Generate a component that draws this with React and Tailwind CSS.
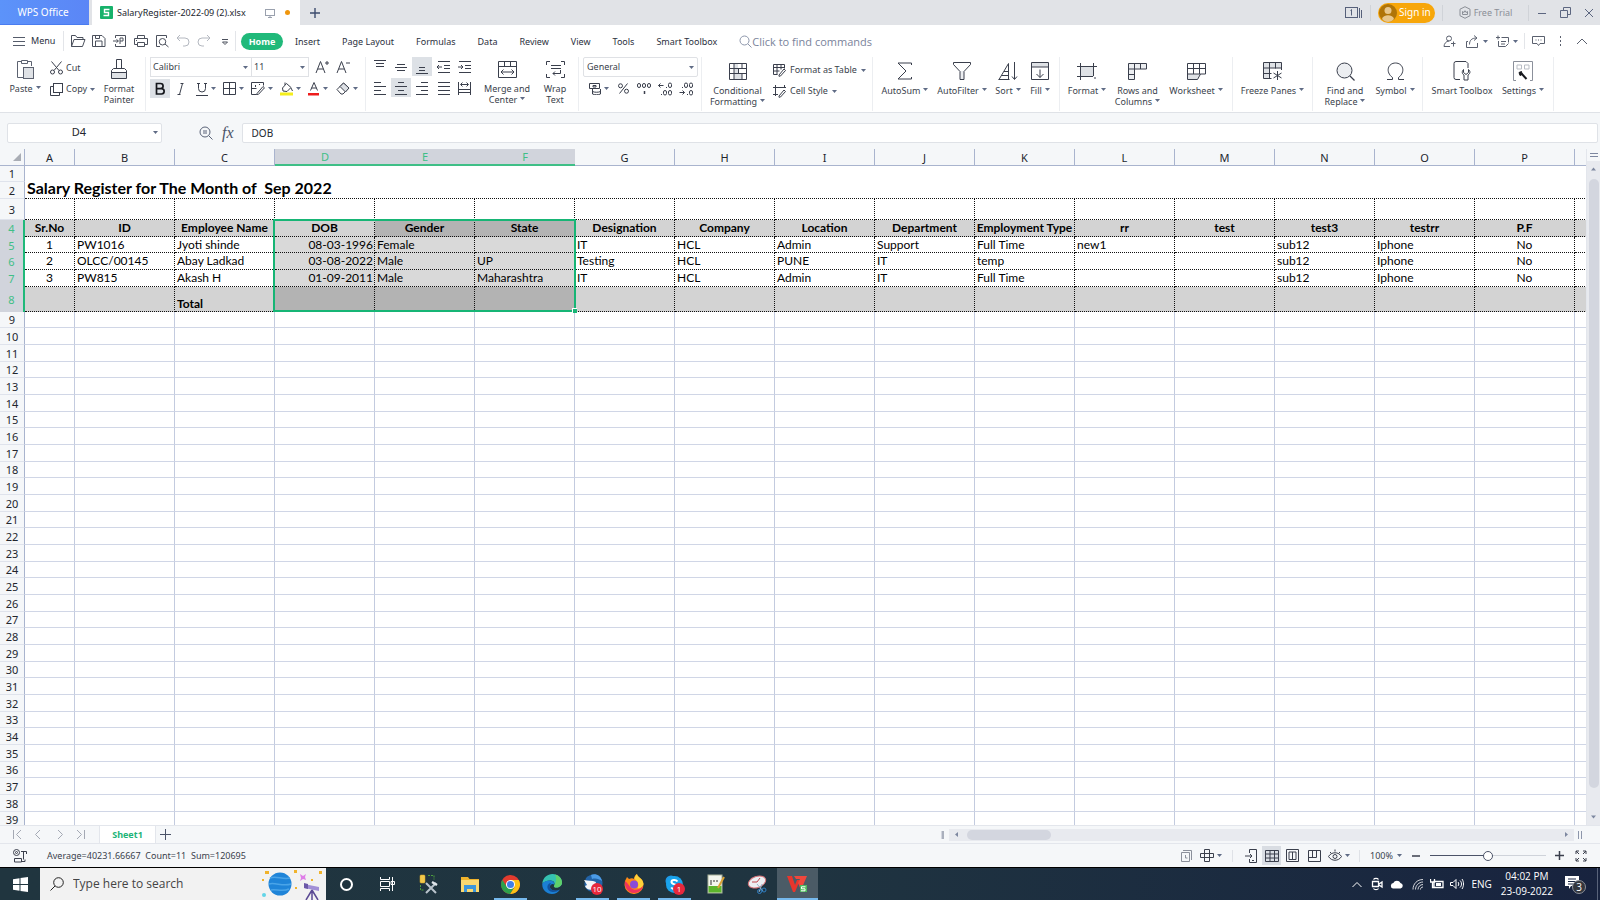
import { memo } from "react";
import clsx from "clsx";

const Svg = ({ w = 16, h = 16, children, className, sw = 1 }) => (
  <svg
    width={w}
    height={h}
    viewBox={`0 0 ${w} ${h}`}
    fill="none"
    stroke="currentColor"
    strokeWidth={sw}
    className={clsx("shrink-0", className)}
    aria-hidden="true"
  >
    {children}
  </svg>
);

const Caret = ({ className }) => (
  <svg width="5" height="3" viewBox="0 0 5 3" className={clsx("shrink-0", className)} aria-hidden="true">
    <path d="M0 0h5L2.5 3z" fill="#5f6b85" />
  </svg>
);

/* ---------- Title bar ---------- */

const TitleBar = () => (
  <header className="flex h-[25px] shrink-0 items-center bg-[#e1e3e7] text-[10px]">
    <button className="h-full w-[89px] border-b border-[#4a7cf0] bg-gradient-to-r from-[#5c93fa] to-[#5b86f6] pr-[3px] text-white">
      WPS Office
    </button>
    <div className="ml-[3px] flex h-full w-[208px] items-center bg-white pl-2 text-[#22262e]">
      <Svg w={13} h={13}>
        <rect width="13" height="13" rx="1" fill="#17b26b" stroke="none" />
        <path d="M9.500 3.500h-5v3h4v3h-5" stroke="#fff" strokeWidth="1.400" />
      </Svg>
      <span className="ml-[4px] w-[148px] text-[9px] whitespace-nowrap">SalaryRegister-2022-09 (2).xlsx</span>
      <Svg w={10} h={10} className="text-[#9aa1ae]">
        <rect x=".5" y="1.500" width="9" height="6" />
        <path d="M5 7.500v2M3 9.500h4" />
      </Svg>
      <span className="ml-[10px] h-[5px] w-[5px] rounded-full bg-[#f0960c]" />
    </div>
    <button aria-label="New tab" className="ml-[10px] text-[#3d4c6e]">
      <Svg w={10} h={10} sw={1.4}>
        <path d="M5 0v10M0 5h10" />
      </Svg>
    </button>
    <div className="ml-auto flex h-full items-center text-[#8b8f97]">
      <Svg w={17} h={12} className="mr-2 text-[#56607a]">
        <rect x=".5" y=".5" width="12" height="10" />
        <path d="M14.500 1v10M16.500 3v8M5.500 3.500l1-1v6" />
      </Svg>
      <span className="h-4 w-px bg-[#d0d3d8]" />
      <button className="mx-[7px] flex h-5 w-[57px] items-center rounded-full bg-[#f7a60a] pl-px text-white">
        <Svg w={18} h={18}>
          <circle cx="9" cy="9" r="9" fill="#b07408" stroke="none" />
          <circle cx="9" cy="6.500" r="3.500" fill="#e8c68c" stroke="none" />
          <path d="M3 15c1-5 11-5 12 0-3 4-9 4-12 0z" fill="#e8c68c" stroke="none" />
        </Svg>
        <span className="ml-[2px] whitespace-nowrap">Sign in</span>
      </button>
      <span className="h-4 w-px bg-[#d0d3d8]" />
      <button className="flex w-[85px] items-center justify-center gap-[3px] text-[9px]">
        <Svg w={12} h={13}>
          <path d="M6 .7l5 2.500v6.500L6 12.300 1 9.700V3.200z" />
          <path d="M3.500 8.500V5.500l1.500 1 1-1.800 1 1.800 1.500-1v3z" />
        </Svg>
        Free Trial
      </button>
      <span className="h-4 w-px bg-[#d0d3d8]" />
      <div className="flex items-center gap-[13px] pl-[8px] pr-[6px] text-[#5c6680]">
        <button aria-label="Minimize"><Svg w={10} h={10}><path d="M1 5.500h8" /></Svg></button>
        <button aria-label="Restore"><Svg w={11} h={11}><path d="M.5 3.500h7v7h-7zM3.500 3V.5h7v7H8" /></Svg></button>
        <button aria-label="Close"><Svg w={10} h={10}><path d="M1 1l8 8M9 1L1 9" /></Svg></button>
      </div>
    </div>
  </header>
);

/* ---------- Menu row ---------- */

const quickIcons = [
  ["Open", <path key="a" d="M1.500 13.500v-11h4l1.500 2h6v2M1.500 13.500l2.500-7h11l-2.500 7z" />],
  ["Save", <path key="a" d="M1.500 13.500v-11h9.500l3 3v8zM4.500 13v-5h6.500v5M4.500 3v2.500h4V3" />],
  ["Export to PDF", <path key="a" d="M3.500 5V2.500h10v11h-10V11M1 8h5M4.500 6.500L6.500 8l-2 1.500M8 11V5h3v3H8" />],
  ["Print", <path key="a" d="M4.500 5V2.500h7V5M4 11.500H1.500v-6h13v6H12M4.500 9.500h7v4h-7zM3 7.500h1" />],
  ["Print preview", <path key="a" d="M6 13.500H2.500v-11h10V5M8.500 5.500a3 3 0 100 6.500 3 3 0 000-6.500zM11 11l3.500 3" />],
  ["Undo", <path key="a" stroke="#b4b8c0" d="M5 2L2 5l3 3M2 5h8a3.500 3.500 0 010 8H8" />],
  ["Redo", <path key="a" stroke="#b4b8c0" d="M11 2l3 3-3 3M14 5H6a3.500 3.500 0 000 8h2" />],
  ["More", <path key="a" d="M5 6.500h6M5.500 9h5L8 11.500z" />],
];

const menuTabs = ["Insert", "Page Layout", "Formulas", "Data", "Review", "View", "Tools", "Smart Toolbox"];

const MenuRow = () => (
  <nav className="flex h-[31px] shrink-0 items-center bg-white pt-px text-[#2b3040]">
    <button className="ml-[13px] flex w-[50px] items-center gap-[6px] text-[9px]">
      <Svg w={12} h={9} className="text-[#555c6b]">
        <path d="M0 .5h12M0 4.500h12M0 8.500h12" />
      </Svg>
      Menu
    </button>
    <span className="h-5 w-px bg-[#e3e5e9]" />
    <div className="ml-[3px] flex text-[#4b505c]">
      {quickIcons.map(([label, shape]) => (
        <button key={label} aria-label={label} className="flex w-[21px] justify-center">
          <Svg>{shape}</Svg>
        </button>
      ))}
    </div>
    <span className="mr-[5px] h-5 w-px bg-[#e3e5e9]" />
    <button className="h-[17px] w-[42px] rounded-full bg-[#20b97a] text-[9px] leading-[17px] font-bold text-white">Home</button>
    <div className="ml-px flex pt-px">
      {menuTabs.map((tab) => (
        <button key={tab} className="px-[11px] text-[9px] whitespace-nowrap">{tab}</button>
      ))}
    </div>
    <label className="ml-[11px] flex items-center text-[#7a839b]">
      <Svg w={13} h={13} className="text-[#8d96ab]">
        <circle cx="5.500" cy="5.500" r="4.500" />
        <path d="M9 9l3.500 3.500" />
      </Svg>
      <input
        aria-label="Find commands"
        placeholder="Click to find commands"
        className="w-[160px] font-['Open_Sans','Noto_Sans',sans-serif] text-[11px] leading-[15px] outline-none placeholder:text-[#7a839b]"
      />
    </label>
    <div className="ml-auto flex items-center text-[#5a606e]">
      <button aria-label="Share with" className="mr-[10px]">
        <Svg w={13} h={13}>
          <circle cx="6" cy="3.500" r="2.500" />
          <path d="M6 6C3 6 1 9 1 11.500h6M8 8.500h4.500M10.500 6.500v5" />
        </Svg>
      </button>
      <button aria-label="Share" className="mr-[8px] flex items-center gap-[4px]">
        <Svg w={13} h={13}>
          <path d="M2 6.500H.5v6h11V8M3.500 9.500c0-4 2-6.500 7-6.500M8 .5L11 3 8 5.500" />
        </Svg>
        <Caret />
      </button>
      <button aria-label="Arrange" className="mr-[6px] flex items-center gap-[4px]">
        <Svg w={13} h={13}>
          <path d="M0 2.500h4M2 .5v4M5.500 2.500h7v5M2.500 6v5.500h7l3-3M5 6.500h5M5 9h4" />
        </Svg>
        <Caret />
      </button>
      <span className="h-4 w-px bg-[#e3e5e9]" />
      <button aria-label="Comments" className="ml-[7px]">
        <Svg w={13} h={12}>
          <path d="M.5 1.500h12v7H8l-1.500 2-1.500-2H.5zM3.500 5h1M6 5h1M8.500 5h1" />
        </Svg>
      </button>
      <button aria-label="More options" className="ml-[14px]">
        <Svg w={3} h={12} sw={0}>
          <path fill="currentColor" d="M1 1h1v2H1zM1 5h1v2H1zM1 9h1v2H1z" />
        </Svg>
      </button>
      <button aria-label="Collapse ribbon" className="ml-[14px] mr-[12px]">
        <Svg w={12} h={7}><path d="M1 6l5-5 5 5" /></Svg>
      </button>
    </div>
  </nav>
);

/* ---------- Ribbon ---------- */

const Group = ({ className, children }) => (
  <div className={clsx("flex h-[54px] shrink-0 border-r border-[#eceef1]", className)}>{children}</div>
);

const BigButton = ({ icon, lines, caret, className }) => (
  <button className={clsx("flex shrink-0 flex-col items-center text-center", className)}>
    <span className="flex h-5 items-center">{icon}</span>
    <span className="mt-1 text-[9px] leading-[11px] whitespace-nowrap">
      {lines.map((line, i) => (
        <span key={line} className="block">
          {line}
          {caret && i === lines.length - 1 && <Caret className="mb-[4px] ml-[3px] inline" />}
        </span>
      ))}
    </span>
  </button>
);

const SmallIcon = ({ label, active, caret, className, children }) => (
  <button
    aria-label={label}
    className={clsx("flex h-[19px] shrink-0 items-center justify-center gap-[3px]", active && "bg-[#dde1e6]", className)}
  >
    {children}
    {caret && <Caret />}
  </button>
);

const alignIcons = [
  ["Align top", false, "M2 1.500h12M4 4.500h8M4 7.500h8"],
  ["Align middle", false, "M4 5.500h8M2 8.500h12M4 11.500h8"],
  ["Align bottom", true, "M5 8.500h6M5 11.500h6M2 14.500h12"],
  ["Decrease indent", false, "M2 2.500h12M8 6.500h6M8 9.500h6M2 13.500h12M1 8h5M3 6L1 8l2 2"],
  ["Increase indent", false, "M2 2.500h12M8 6.500h6M8 9.500h6M2 13.500h12M1 8h5M4 6l2 2-2 2"],
  ["Align left", false, "M2 2.500h7M2 6.500h12M2 10.500h7M2 14.500h12"],
  ["Center", true, "M5 2.500h6M2 6.500h12M5 10.500h6M2 14.500h12"],
  ["Align right", false, "M7 2.500h7M2 6.500h12M7 10.500h7M2 14.500h12"],
  ["Justify", false, "M2 2.500h12M2 6.500h12M2 10.500h12M2 14.500h12"],
  ["Distribute", false, "M1.500 2v13M13.500 2v13M4 4.500h7M5.500 2.500l-2 2 2 2M9.500 2.500l2 2-2 2M1.500 9.500h12M1.500 12.500h12"],
];

const FontGroup = () => (
  <Group className="w-[220px] flex-col pl-[4px]">
    <div className="flex h-[20px] items-center">
      <div className="flex h-[20px] w-[159px] items-center border border-[#dfe1e5]">
        <label className="relative flex h-full w-[101px] items-center border-r border-[#dfe1e5]">
          <select aria-label="Font" className="w-full appearance-none pl-[2px] text-[9px] leading-[14px]" defaultValue="Calibri">
            <option>Calibri</option>
          </select>
          <Caret className="absolute right-[3px]" />
        </label>
        <label className="relative flex h-full flex-1 items-center">
          <select aria-label="Font size" className="w-full appearance-none pl-[2px] text-[9px] leading-[14px]" defaultValue="11">
            <option>11</option>
          </select>
          <Caret className="absolute right-[3px]" />
        </label>
      </div>
      <SmallIcon label="Increase font size" className="w-[25px]">
        <Svg w={14} h={14}><path d="M1 13L5.500 1.500 10 13M2.800 9h5.500M10 3h4M12 1v4" /></Svg>
      </SmallIcon>
      <SmallIcon label="Decrease font size" className="w-[18px]">
        <Svg w={14} h={14}><path d="M1 13L5.500 1.500 10 13M2.800 9h5.500M10 3h4" /></Svg>
      </SmallIcon>
    </div>
    <div className="mt-[2px] flex">
      <SmallIcon label="Bold" active className="w-5">
        <Svg w={12} h={14} sw={1.7} className="text-[#15171c]">
          <path d="M2.500 1.500h4a2.600 2.600 0 010 5.200h-4zM2.500 6.700h5a2.600 2.600 0 010 5.300h-5z" />
        </Svg>
      </SmallIcon>
      <SmallIcon label="Italic" className="w-[22px]">
        <Svg w={10} h={14}><path d="M4.500 1.500h3M1.500 12.500h3M6.500 1.500l-3 11" /></Svg>
      </SmallIcon>
      <SmallIcon label="Underline" caret className="w-[27px]">
        <Svg w={12} h={14}><path d="M2.500 1v5.500a3.500 3.500 0 007 0V1M0 13.500h12M1 1.500h3M8 1.500h3" /></Svg>
      </SmallIcon>
      <SmallIcon label="Borders" caret className="w-[28px]">
        <Svg w={13} h={13}><path d="M.5.5h12v12H.5zM6.500.5v12M.5 6.500h12" /></Svg>
      </SmallIcon>
      <SmallIcon label="Draw border" caret className="w-[29px]">
        <Svg w={14} h={13}>
          <path d="M.5.5h12v3M.5.5v12h5M4.500 3v2M.5 6.500h5M8.500 2v1" />
          <path d="M6 11.500l6-7 1.500 1.300-6 6.500-2 .2z" />
        </Svg>
      </SmallIcon>
      <SmallIcon label="Fill color" caret className="w-[28px]">
        <Svg w={13} h={14}>
          <path d="M2.500 6L6.500 1.500 11 5.500 7 9.500 3 9zM5 3V.5M11 6l1.500 3" />
          <rect x="0" y="10.500" width="13" height="3" fill="#f4ee1c" stroke="none" />
        </Svg>
      </SmallIcon>
      <SmallIcon label="Font color" caret className="w-[28px]">
        <Svg w={12} h={14}>
          <path d="M2.500 8.500L6 .5l3.500 8M3.500 6h5" />
          <rect x="0" y="11" width="11" height="2.500" fill="#ee1c1c" stroke="none" />
        </Svg>
      </SmallIcon>
      <SmallIcon label="Clear" caret className="w-[29px]">
        <Svg w={14} h={13}>
          <path d="M1 7.500l6.500-6.500 5.500 5L7 12H5z" fill="#fff" />
          <path d="M4 4.500l5.500 5.500L13 6 7.500 1z" fill="#dde0e5" />
        </Svg>
      </SmallIcon>
    </div>
  </Group>
);

const NumberGroup = () => (
  <Group className="w-[123px] flex-col pl-[4px]">
    <label className="relative flex h-[20px] w-[115px] items-center rounded-xs border border-[#dfe1e5]">
      <select aria-label="Number format" className="w-full appearance-none pl-[3px] text-[9px] leading-[14px]" defaultValue="General">
        <option>General</option>
      </select>
      <Caret className="absolute right-[3px]" />
    </label>
    <div className="mt-[2px] flex items-center">
      <SmallIcon label="Currency" caret className="w-[30px]">
        <Svg w={13} h={13}>
          <path d="M1.500 1.500h10v5h-10zM5 3.500h3v1.500H5zM4.500 7v5c2 1 6 1 8 0V7M4.500 9.500c2 1 6 1 8 0" />
        </Svg>
      </SmallIcon>
      <SmallIcon label="Percent" className="w-[20px]">
        <Svg w={11} h={11}>
          <circle cx="2.500" cy="2.800" r="2" />
          <circle cx="8.500" cy="8.200" r="2" />
          <path d="M9.500.5l-8 10" />
        </Svg>
      </SmallIcon>
      <SmallIcon label="Comma style" className="w-[22px]">
        <Svg w={15} h={13}>
          <rect x=".5" y="1.500" width="3" height="4" rx="1.500" />
          <rect x="5.500" y="1.500" width="3" height="4" rx="1.500" />
          <rect x="10.500" y="1.500" width="3" height="4" rx="1.500" />
          <path d="M7.500 9v3" strokeWidth="1.500" />
        </Svg>
      </SmallIcon>
      <SmallIcon label="Increase decimal" className="w-[20px]">
        <Svg w={14} h={14}>
          <rect x="10.500" y="1" width="3" height="4.500" rx="1.500" />
          <rect x="5.500" y="8.500" width="3" height="4.500" rx="1.500" />
          <rect x="10.500" y="8.500" width="3" height="4.500" rx="1.500" />
          <path d="M.5 3.500h5M2.500 1.500l-2 2 2 2M8 5.500h1M3 12.500h1" />
        </Svg>
      </SmallIcon>
      <SmallIcon label="Decrease decimal" className="w-[22px]">
        <Svg w={14} h={14}>
          <rect x="5.500" y="1" width="3" height="4.500" rx="1.500" />
          <rect x="10.500" y="1" width="3" height="4.500" rx="1.500" />
          <rect x="10.500" y="8.500" width="3" height="4.500" rx="1.500" />
          <path d="M.5 10.500h5M3.500 8.500l2 2-2 2M8 12.500h1M3 5.500h1" />
        </Svg>
      </SmallIcon>
    </div>
  </Group>
);

const Ribbon = () => (
  <section className="flex h-[57px] shrink-0 items-start overflow-hidden border-b border-[#dfe2e7] bg-white pt-px text-[#3a3f4c]">
    <Group className="w-[146px] pt-[2px]">
      <BigButton
        className="w-[50px]"
        lines={["Paste"]}
        caret
        icon={
          <Svg w={19} h={20} className="text-[#5c6270]">
            <path d="M6 2.500H1.500v16H8M12 2.500h3.500V7M5.500 1.500h6v3h-6z" />
            <rect x="7.500" y="8.500" width="10" height="11" fill="#dfe2e6" />
          </Svg>
        }
      />
      <div className="flex w-[46px] flex-col text-[9px]">
        <button className="flex h-[18px] items-center gap-[3px]">
          <Svg w={13} h={14}>
            <circle cx="2.500" cy="11" r="2" />
            <circle cx="10.500" cy="11" r="2" />
            <path d="M1.500.5l7.500 9M11.500.5l-7.500 9" />
          </Svg>
          Cut
        </button>
        <button className="mt-[3px] flex h-[18px] items-center gap-[3px]">
          <Svg w={13} h={13}>
            <path d="M3.500 3.500h-3v9h9v-3" />
            <rect x="3.500" y=".5" width="9" height="9" />
          </Svg>
          Copy
          <Caret />
        </button>
      </div>
      <BigButton
        className="w-[46px]"
        lines={["Format", "Painter"]}
        icon={
          <Svg w={16} h={20}>
            <path d="M1 14h14v5H1z" fill="#dfe2e6" stroke="none" />
            <path d="M5.500 9.500v-9h5v9M.5 19.500v-8l2-2h11l2 2v8zM.5 13.500h15" />
          </Svg>
        }
      />
    </Group>

    <FontGroup />

    <Group className="w-[213px]">
      <div className="ml-[4px] grid w-[106px] content-start grid-cols-5 gap-y-[2px]">
        {alignIcons.map(([label, active, d]) => (
          <SmallIcon key={label} label={label} active={active} className="w-[20px]">
            <Svg w={16} h={16}><path d={d} /></Svg>
          </SmallIcon>
        ))}
      </div>
      <BigButton
        className="w-[62px] pt-[2px]"
        lines={["Merge and", "Center"]}
        caret
        icon={
          <Svg w={19} h={17}>
            <path d="M.5.500h18v16H.5zM.5 5.500h18M6.500.500v5M12.500.500v5M3 11h13M5.500 8.500L3 11l2.500 2.500M13.500 8.500L16 11l-2.500 2.500" />
          </Svg>
        }
      />
      <BigButton
        className="w-[34px] pt-[2px]"
        lines={["Wrap", "Text"]}
        icon={
          <Svg w={19} h={17}>
            <path d="M4 .500H.5V4M15 .500h3.500V4M4 16.500H.5V13M15 16.500h3.500V13M5 4.500h10M5 7.500h10M14.500 9v3.500H7M9 10.500L7 12.500l2 2" />
          </Svg>
        }
      />
    </Group>

    <NumberGroup />

    <Group className="w-[171px] pt-[4px]">
      <BigButton
        className="w-[71px]"
        lines={["Conditional", "Formatting"]}
        caret
        icon={
          <Svg w={18} h={17}>
            <path d="M5 1h4v15H5zM9 11h4v5H9z" fill="#dfe2e6" stroke="none" />
            <path d="M.5.500h17v16H.5zM.5 5.500h17M.5 10.500h17M5 .500v16M9.500 5.500v5M13 .500v5M13 10.500v6" />
          </Svg>
        }
      />
      <div className="flex flex-col text-[9px]">
        <button className="flex h-[18px] items-center gap-[4px] whitespace-nowrap">
          <Svg w={13} h={14}>
            <path d="M.5 1.500h11v4M.5 1.500v10h4M.5 4.500h11M.5 8h6M4 1.500v10M8 1.500v5" />
            <path d="M6 12l5-6 1.500 1.500-5 5.500-1.500.3z" />
          </Svg>
          Format as Table
          <Caret />
        </button>
        <button className="mt-[3px] flex h-[18px] items-center gap-[4px] whitespace-nowrap">
          <Svg w={13} h={14}>
            <path d="M0 3.500h13M2.500 1v11M0 10.500h5M11.500 1v3" />
            <path d="M6 12l5-6 1.500 1.500-5 5.500-1.500.3z" />
          </Svg>
          Cell Style
          <Caret />
        </button>
      </div>
    </Group>

    <Group className="w-[187px] pt-[4px] pl-[3px]">
      <BigButton
        className="w-[58px]"
        lines={["AutoSum"]}
        caret
        icon={<Svg w={16} h={18}><path d="M14.500 3V1H1l8 8-8 8h13.500v-2" /></Svg>}
      />
      <BigButton
        className="w-[56px]"
        lines={["AutoFilter"]}
        caret
        icon={
          <Svg w={18} h={18}>
            <path d="M7 9h4v8H7z" fill="#eceef1" stroke="none" />
            <path d="M.5.500h17v2L11 9.500v8H7v-8L.5 2.500z" />
          </Svg>
        }
      />
      <BigButton
        className="w-[36px]"
        lines={["Sort"]}
        caret
        icon={<Svg w={20} h={19}><path d="M1 17.500L10.500 1.500v16M3.500 13.500h7M6 9.500h4.500M.5 17.500h11M16.500 0v17M14 14.500l2.500 3 2.500-3" /></Svg>}
      />
      <BigButton
        className="w-[28px]"
        lines={["Fill"]}
        caret
        icon={
          <Svg w={18} h={18}>
            <path d="M1 1h16v4H1z" fill="#dfe2e6" stroke="none" />
            <path d="M.5.500h17v17H.5zM.5 5h17M9 7.500v8M5.500 12L9 15.500l3.500-3.500" />
          </Svg>
        }
      />
    </Group>

    <Group className="w-[173px] pt-[4px] pl-[3px]">
      <BigButton
        className="w-[48px]"
        lines={["Format"]}
        caret
        icon={
          <Svg w={20} h={17}>
            <path d="M3 3.500h14v10H3z" fill="#dfe2e6" stroke="none" />
            <path d="M0 3.500h20M0 13.500h16M3.500 0v17M16.500 0v13M18 14v2" />
          </Svg>
        }
      />
      <BigButton
        className="w-[53px]"
        lines={["Rows and", "Columns"]}
        caret
        icon={
          <Svg w={19} h={17}>
            <path d="M1 1h17v5H7v10H1z" fill="#eceef1" stroke="none" />
            <path d="M.5.500h18v5.500H6.500v10.500h-6zM.5 6h6M.5 11.500h6M6.500.500V6M12.500.500V6" />
          </Svg>
        }
      />
      <BigButton
        className="w-[64px]"
        lines={["Worksheet"]}
        caret
        icon={
          <Svg w={19} h={17}>
            <path d="M1 11h12l-2 5H1z" fill="#dfe2e6" stroke="none" />
            <path d="M.5.500h18v10.500h-5l-3 5.500H.5zM.5 5.500h18M.5 11h13M6.500.500V11M12.500.500V11" />
          </Svg>
        }
      />
    </Group>

    <Group className="w-[80px] justify-center pt-[4px]">
      <BigButton
        lines={["Freeze Panes"]}
        caret
        icon={
          <Svg w={20} h={19}>
            <path d="M1 1h17v5H7v10H1z" fill="#dfe2e6" stroke="none" />
            <path d="M.5 16.500V.500h18V8M.5 6h18M6.500.500v16M12.500.500v6M.5 11.500h8M.5 16.500h8M14.500 9v9M10.500 11l8 5M18.500 11l-8 5" />
          </Svg>
        }
      />
    </Group>

    <Group className="w-[110px] pt-[4px] pl-[7px]">
      <BigButton
        className="w-[50px]"
        lines={["Find and", "Replace"]}
        caret
        icon={
          <Svg w={19} h={19}>
            <circle cx="8.500" cy="8.500" r="7.500" fill="#eceef1" />
            <path d="M14 14l4.500 4.500" strokeWidth="1.300" />
          </Svg>
        }
      />
      <BigButton
        className="w-[50px]"
        lines={["Symbol"]}
        caret
        icon={<Svg w={17} h={19}><path d="M0 17.500h5.500v-2C-2 10 1 1 8.500 1s10.500 9 3 14.500v2H17" /></Svg>}
      />
    </Group>

    <Group className="w-[131px] pt-[4px] pl-[4px]">
      <BigButton
        className="w-[70px]"
        lines={["Smart Toolbox"]}
        icon={
          <Svg w={18} h={20}>
            <path d="M7 18.500H3a2 2 0 01-2-2v-14a2 2 0 012-2h10l2 2V7" />
            <path d="M10.500 8.500v3l2.500 2 2.500-2v-3c2 1.500 2 4-.5 5.500V19h-4v-5c-2.500-1.500-2-4-.5-5.500z" fill="#fff" />
          </Svg>
        }
      />
      <BigButton
        className="w-[52px]"
        lines={["Settings"]}
        caret
        icon={
          <Svg w={20} h={20}>
            <path d="M3 19.500H.5V.500h19v19H17" stroke="#8b909b" />
            <path d="M4 4h4.500v4H4zM11.500 4H16v4h-4.500z" stroke="#b9bdc5" />
            <path d="M8.500 12.500l5 5.500" stroke="#15171c" strokeWidth="2" />
            <path d="M6 11.500l2.500-1 .500 3-2 1z" fill="#15171c" stroke="#15171c" />
          </Svg>
        }
      />
    </Group>
  </section>
);

/* ---------- Formula bar ---------- */

const FormulaBar = () => (
  <div className="flex h-9 shrink-0 items-center bg-[#f5f7f9] pt-[3px] pr-[2px] pl-[7px] text-[11px] text-[#22262e]">
    <label className="relative flex h-[20px] w-[155px] items-center rounded-xs border border-[#dfe2e7] bg-white">
      <input aria-label="Name box" defaultValue="D4" className="w-full pr-[11px] text-center text-[11px] outline-none" />
      <Caret className="absolute right-[3px]" />
    </label>
    <button aria-label="Zoom out selection" className="ml-[37px] text-[#5a6378]">
      <Svg w={14} h={14}>
        <circle cx="6" cy="6" r="5" />
        <path d="M9.800 9.800l3.700 3.700M4 5h4M4 7h4" />
      </Svg>
    </button>
    <button className="ml-[9px] font-['Liberation_Serif',serif] text-[16px] leading-[18px] text-[#4b5368] italic">fx</button>
    <input
      aria-label="Formula"
      defaultValue="DOB"
      className="ml-[8px] h-[20px] min-w-0 flex-1 rounded-xs border border-[#dfe2e7] bg-white pl-[9px] text-[10px] outline-none"
    />
  </div>
);

/* ---------- Sheet ---------- */

// the last column is only partly in view and has no letter
const columns = [..."ABCDEFGHIJKLMNOP", ""];

const headings = [
  "Sr.No", "ID", "Employee Name", "DOB", "Gender", "State", "Designation", "Company",
  "Location", "Department", "Employment Type", "rr", "test", "test3", "testrr", "P.F", "",
];

const employees = [
  ["1", "PW1016", "Jyoti shinde", "08-03-1996", "Female", "", "IT", "HCL", "Admin", "Support", "Full Time", "new1", "", "sub12", "Iphone", "No", ""],
  ["2", "OLCC/00145", "Abay Ladkad", "03-08-2022", "Male", "UP", "Testing", "HCL", "PUNE", "IT", "temp", "", "", "sub12", "Iphone", "No", ""],
  ["3", "PW815", "Akash H", "01-09-2011", "Male", "Maharashtra", "IT", "HCL", "Admin", "IT", "Full Time", "", "", "sub12", "Iphone", "No", ""],
];

const totals = columns.map((c) => (c === "C" ? "Total" : ""));
const blankRows = Array.from({ length: 31 }, (_, i) => i + 9);

const isSelected = (col) => col >= 3 && col <= 5;

const RowHead = ({ n, selected }) => (
  <th
    scope="row"
    className={clsx(
      "p-0 font-['Noto_Sans',sans-serif] text-center text-[11px] leading-[15px] font-normal",
      selected
        ? "border-r-2 border-[#20b97a] bg-[#d1d4dc] text-[#3fbf87]"
        : "border-r border-b border-r-[#a9b4ce] border-b-[#dfe3ec] bg-[#f5f7f9] text-[#22262e]"
    )}
  >
    {n}
  </th>
);

const dotted = "border-r border-b border-dotted border-[#111]";

const align = (col) => {
  if (col === 0 || col === 15) return "text-center";
  if (col === 3) return "text-right pr-px";
  return "text-left pl-[2px]";
};

const Sheet = () => (
  <div className="relative min-w-0 flex-1 overflow-hidden bg-white">
    <table className="w-[1675px] table-fixed border-separate border-spacing-0 text-black">
      <colgroup>
        <col className="w-[25px]" />
        {columns.map((c) => (
          <col key={c} className={c === "A" ? "w-[50px]" : "w-[100px]"} />
        ))}
      </colgroup>
      <thead>
        <tr className="h-[17px] bg-[#f5f7f9] text-[11px] leading-[15px]">
          <td className="border-r border-b border-[#a9b4ce] p-0">
            <Svg w={8} h={8} className="ml-auto mr-[3px]">
              <path d="M8 0v8H0z" fill="#a9adb5" stroke="none" />
            </Svg>
          </td>
          {columns.map((c, i) => (
            <th
              key={c}
              scope="col"
              className={clsx(
                "p-0 font-normal",
                isSelected(i)
                  ? "border-b-2 border-[#3fbf87] bg-[#d1d4dc] text-[#3fbf87]"
                  : "border-r border-b border-[#a9b4ce] text-[#22262e]"
              )}
            >
              {c}
            </th>
          ))}
        </tr>
      </thead>
      <tbody className="font-['Lato','Noto_Sans',sans-serif] text-[12px] leading-[14px]">
        <tr className="h-[16px]">
          <RowHead n={1} />
          <td colSpan={17} rowSpan={2} className="border-b border-dotted border-[#111] p-0 pl-[2px] align-bottom text-[16px] leading-[20px] font-bold whitespace-pre">
            Salary Register for The Month of  Sep 2022
          </td>
        </tr>
        <tr className="h-[17px]">
          <RowHead n={2} />
        </tr>
        <tr className="h-[21px]">
          <RowHead n={3} />
          {columns.map((c) => <td key={c} className={clsx(dotted, "p-0")} />)}
        </tr>
        <tr className="h-[17px]">
          <RowHead n={4} selected />
          {headings.map((h, i) => (
            <td
              key={i}
              className={clsx(
                dotted,
                "p-0 text-center font-bold whitespace-nowrap",
                i === 4 || i === 5 ? "bg-[#b3b3b3]" : "bg-[#d3d3d3]"
              )}
            >
              {h}
            </td>
          ))}
        </tr>
        {employees.map((row, r) => (
          <tr key={row[0]} className={r === 0 ? "h-[16px]" : "h-[17px]"}>
            <RowHead n={r + 5} selected />
            {row.map((value, i) => (
              <td key={i} className={clsx(dotted, "p-0 whitespace-nowrap", align(i), isSelected(i) && "bg-[#d9d9d9]")}>
                {value}
              </td>
            ))}
          </tr>
        ))}
        <tr className="h-[25px]">
          <RowHead n={8} selected />
          {totals.map((value, i) => (
            <td
              key={i}
              className={clsx(dotted, "p-0 pl-[2px] align-bottom font-bold", isSelected(i) ? "bg-[#b3b3b3]" : "bg-[#d3d3d3]")}
            >
              {value}
            </td>
          ))}
        </tr>
        {blankRows.map((n) => (
          <tr key={n} className={n % 3 === 0 ? "h-[16px]" : "h-[17px]"}>
            <RowHead n={n} />
            {columns.map((c) => (
              <td key={c} className="border-r border-b border-r-[#c3cbdf] border-b-[#d0d6e6] p-0" />
            ))}
          </tr>
        ))}
      </tbody>
    </table>
    {/* Selection frame over D4:F8 */}
    <div className="pointer-events-none absolute top-[70px] left-[273px] h-[93px] w-[303px] border-2 border-[#17b575]">
      <span className="absolute -right-[3px] -bottom-[3px] h-[5px] w-[5px] border-t border-l border-white bg-[#17b575]" />
    </div>
  </div>
);

const VerticalScroll = () => (
  <div className="flex w-[14px] shrink-0 flex-col items-center border-l border-[#e3e6ec] bg-[#f5f7f9]">
    <Svg w={8} h={12} className="text-[#7d87a0]"><path d="M0 4.500h8M0 7.500h8" /></Svg>
    <div className="flex w-full flex-1 flex-col items-center bg-[#e8eaef]">
      <Svg w={7} h={18}><path d="M1 9.500l2.500-3 2.500 3z" fill="#7d87a0" stroke="none" /></Svg>
      <div className="w-[10px] flex-1 rounded-full bg-[#d3d6df]" />
      <Svg w={7} h={37}><path d="M1 27.500l2.500 3 2.500-3z" fill="#7d87a0" stroke="none" /></Svg>
    </div>
  </div>
);

/* ---------- Sheet tabs and status bar ---------- */

const sheetNav = [
  ["First sheet", "M1.500 1v9M9 1L4.500 5.500 9 10"],
  ["Previous sheet", "M7 1L2.500 5.500 7 10"],
  ["Next sheet", "M3 1l4.500 4.500L3 10"],
  ["Last sheet", "M1 1l4.500 4.500L1 10M8.500 1v9"],
];

const SheetTabs = () => (
  <div className="flex h-[18px] shrink-0 items-center border-t border-[#e3e6ec] bg-[#f5f7f9]">
    <div className="flex w-[99px] justify-between pr-[13px] pl-[12px] text-[#a4a9b4]">
      {sheetNav.map(([label, d]) => (
        <button key={label} aria-label={label}><Svg w={10} h={11}><path d={d} /></Svg></button>
      ))}
    </div>
    <button className="h-full w-[57px] border-x border-[#e3e6ec] bg-white text-[9px] leading-[18px] font-bold text-[#1cb478]">Sheet1</button>
    <button aria-label="Add sheet" className="ml-1 text-[#4b5368]">
      <Svg w={11} h={11}><path d="M5.500 0v11M0 5.500h11" /></Svg>
    </button>
    <div className="ml-auto flex h-full w-[659px] items-center">
      <span className="mr-[5px] h-[8px] w-[3px] border-r-2 border-l border-r-[#aab0bd] border-l-[#d3d6df]" />
      <div className="flex h-[12px] flex-1 items-center bg-[#e8eaef]">
        <Svg w={5} h={7} className="ml-[5px]"><path d="M4 1L1 3.500 4 6z" fill="#7d87a0" stroke="none" /></Svg>
        <div className="ml-[8px] h-[10px] w-[84px] rounded-full bg-[#d3d6df]" />
        <Svg w={5} h={7} className="mr-[5px] ml-auto"><path d="M1 1l3 2.500L1 6z" fill="#7d87a0" stroke="none" /></Svg>
      </div>
      <span className="mr-[18px] ml-[4px] h-[8px] w-[4px] border-x border-[#8d96ab]" />
    </div>
  </div>
);

const StatusBar = () => (
  <div className="flex h-[24px] shrink-0 items-center border-t border-[#e3e6ec] bg-[#f5f7f9] text-[9px] text-[#3a3f4c]">
    <button aria-label="Record macro" className="ml-[13px] w-[34px]">
      <Svg w={14} h={14}>
        <circle cx="3.500" cy="3.500" r="3" />
        <circle cx="3.500" cy="3.500" r="1" />
        <path d="M8 2.500h5.500v2.500M10.500 2.500v8M1.500 9.500h7v3.500h-7zM8.500 12.500h3.500v-2" />
      </Svg>
    </button>
    <span className="whitespace-pre">Average=40231.66667  Count=11  Sum=120695</span>
    <div className="ml-auto flex h-full items-center">
      <Svg w={11} h={12}><path d="M2 .5h8.500V10M.5 2.500h8v9h-8zM4.500 5v3h2" stroke="#8b909b" /></Svg>
      <button aria-label="Reading layout" className="ml-[8px] flex items-center gap-[3px]">
        <Svg w={14} h={13}><path d="M4.500.5h5v12h-5zM.5 4.500h13v4H.5z" /></Svg>
        <Caret />
      </button>
      <span className="mr-[12px] ml-[10px] h-3 w-px bg-[#dfe2e7]" />
      <button aria-label="Mobile view" className="mr-[4px]">
        <Svg w={13} h={14}><path d="M4.500 4V.5h7v13h-7V10M0 7h7M5 5l2 2-2 2M7 11.500h2" /></Svg>
      </button>
      <button aria-label="Normal view" className="flex h-[19px] w-[19px] items-center justify-center bg-[#d9dde3]">
        <Svg w={14} h={12}><path d="M.5.5h13v11H.5zM.5 4h13M.5 8h13M5 .5v11M9.500.5v11" /></Svg>
      </button>
      <button aria-label="Page layout view" className="ml-[5px]">
        <Svg w={13} h={13}><path d="M.5.5h12v12H.5zM3 3h7v7.500H3zM6.500 3v7.500" /></Svg>
      </button>
      <button aria-label="Page break preview" className="ml-[9px]">
        <Svg w={13} h={12}><path d="M.5.5h12v11H.5zM.5 7.500h8v-7M4.500.5v7" /></Svg>
      </button>
      <button aria-label="Reading mode" className="ml-[7px] flex items-center gap-[3px]">
        <Svg w={14} h={13}>
          <path d="M.5 7.500c3-5 10-5 13 0-3 5-10 5-13 0zM2 3l1.500 1.500M7 .5v2M12 3l-1.500 1.500" />
          <circle cx="7" cy="7.500" r="2" />
        </Svg>
        <Caret />
      </button>
      <span className="mr-[10px] ml-[9px] h-3 w-px bg-[#dfe2e7]" />
      <button className="flex items-center gap-[4px]">100%<Caret /></button>
      <button aria-label="Zoom out" className="ml-[10px]"><Svg w={8} h={8} sw={1.5}><path d="M0 4h8" /></Svg></button>
      <div className="relative ml-[10px] flex w-[116px] items-center">
        <div className="absolute h-px w-full bg-[#cfd3da]" />
        <div className="absolute h-px w-1/2 bg-[#4b5368]" />
        <input
          type="range"
          aria-label="Zoom"
          defaultValue={50}
          className="relative w-full appearance-none bg-transparent [&::-webkit-slider-thumb]:h-[10px] [&::-webkit-slider-thumb]:w-[10px] [&::-webkit-slider-thumb]:appearance-none [&::-webkit-slider-thumb]:rounded-full [&::-webkit-slider-thumb]:border [&::-webkit-slider-thumb]:border-[#4b5368] [&::-webkit-slider-thumb]:bg-white"
        />
      </div>
      <button aria-label="Zoom in" className="ml-[9px]"><Svg w={9} h={9} sw={1.5}><path d="M4.500 0v9M0 4.500h9" /></Svg></button>
      <button aria-label="Full screen" className="mr-[13px] ml-[11px]">
        <Svg w={12} h={12}><path d="M1 4V1h3M8 1h3v3M11 8v3H8M4 11H1V8M1 1l3 3M11 1L8 4M11 11L8 8M1 11l3-3" /></Svg>
      </button>
    </div>
  </div>
);

/* ---------- Taskbar ---------- */

const Badge = ({ children }) => (
  <span className="absolute top-[15px] right-[10px] flex h-[12px] w-[12px] items-center justify-center rounded-full bg-[#e8283c] text-[8px] leading-[12px] text-white">
    {children}
  </span>
);

const apps = [
  {
    name: "Cortana",
    icon: <Svg w={15} h={15} sw={2} className="text-white"><circle cx="7.500" cy="7.500" r="5.500" /></Svg>,
  },
  {
    name: "Task view",
    icon: <Svg w={15} h={14} className="text-white"><path d="M.5 0v2.500h9V0M.5 14v-2.500h9V14M.5 4.500h9v5h-9zM12.500 0v14M11 4.500h3.500v3H11z" /></Svg>,
  },
  {
    name: "Admin tools",
    icon: (
      <Svg w={20} h={20}>
        <rect x="1" y="1" width="5" height="8" rx="1" fill="#f2c94c" stroke="#d9a520" strokeWidth=".5" />
        <path d="M9 1.500h6v4M1.500 11v5h4" stroke="#4c9a3f" strokeDasharray="2 1" />
        <path d="M7 9l10 10M17 9L7 19" stroke="#b9c3cc" strokeWidth="2" />
        <path d="M13 8l5 3" stroke="#dfe5ea" strokeWidth="2.500" />
      </Svg>
    ),
  },
  {
    name: "File Explorer",
    icon: (
      <Svg w={18} h={17} sw={0}>
        <path d="M0 1h7l1.500 2H18v13H0z" fill="#f0b32c" />
        <path d="M0 4h18v12H0z" fill="#fbd971" />
        <path d="M3 9h12v7h-3v-3H6v3H3z" fill="#3d97dc" />
      </Svg>
    ),
  },
  {
    name: "Chrome",
    open: true,
    icon: (
      <Svg w={19} h={19} sw={0}>
        <circle cx="9.500" cy="9.500" r="9.500" fill="#e33b2e" />
        <path d="M9.500 5h8.300A9.500 9.500 0 019 19l4.500-7z" fill="#fbc116" />
        <path d="M1.300 4.700A9.500 9.500 0 009 19l4.300-6.800-7.700-.7z" fill="#2da14c" />
        <circle cx="9.500" cy="9.500" r="4.500" fill="#fff" />
        <circle cx="9.500" cy="9.500" r="3.500" fill="#3f7ee8" />
      </Svg>
    ),
  },
  {
    name: "Edge",
    icon: (
      <Svg w={20} h={20} sw={0}>
        <path d="M.3 9.500C1 3.500 5.500 0 10.500 0 16 0 20 4 20 8.500c0 3.500-3 5-5.500 5-2 0-3-.7-2.500-1.500 1.500-2.500 0-5.500-3.500-5.500C4.500 6.500 2 8 .3 9.500z" fill="#35c1b1" />
        <path d="M13 .5C17 1.500 20 4.500 20 8.500c0 3.500-3 5-5.500 5-2 0-3-.7-2.500-1.500 2-3 3-7 1-11.500z" fill="#5fd06a" />
        <path d="M.3 9.500C2 7.500 4.500 6.500 8 6.500c3 0 4.500 2 4.300 4-2-1.500-4.800.5-4.300 3 .6 3 5 4.500 10 2C16 18.500 13 20 10 20 4 20-.3 15.500.3 9.500z" fill="#1b7fd4" />
        <path d="M8 9c-4 2-3.500 8 2.500 9 2.500.3 5-.5 7-2.200-4 1.500-8.500.7-9.500-2.300-.4-1.500 0-3 1-4z" fill="#12529e" />
      </Svg>
    ),
  },
  {
    name: "Thunderbird",
    open: true,
    badge: "10",
    icon: (
      <Svg w={20} h={20} sw={0}>
        <path d="M3 4C7-1 16-1 19 6c2 6-2 12-9 12-5 0-9-4-8.500-9z" fill="#2364a8" />
        <path d="M8 1c5-2 10 1 11 6-3-2-6-3-10-2z" fill="#4b9be6" />
        <path d="M1 6c4 1 8 0 12 2l-2 7c-4 2-8 0-9-3l2-1z" fill="#f3f5f8" />
      </Svg>
    ),
  },
  {
    name: "Firefox",
    open: true,
    icon: (
      <Svg w={20} h={20} sw={0}>
        <path d="M1 7l2-4 2 2c2-1 4-1 5 0 0-2 1-4 3-5 0 3 6 4 6.500 10A9.500 9.500 0 01.5 11z" fill="#ff8a16" />
        <path d="M13 0c0 3 6 4 6.500 10-1 4-4 5-6 4 2-4 0-7-3-9 0-2 1-4 2.500-5z" fill="#ffd23a" />
        <path d="M1 7c-1 6 3 12 9 12 5 0 8-3 9-7-3 4-9 5-12 2C5 12 4 9 1 7z" fill="#f0325e" />
        <circle cx="10" cy="10.500" r="4" fill="#8a4bd8" />
      </Svg>
    ),
  },
  {
    name: "Skype",
    open: true,
    badge: "1",
    icon: (
      <Svg w={19} h={19}>
        <circle cx="6" cy="6" r="5.500" fill="#1f9be8" stroke="none" />
        <circle cx="9.500" cy="9.500" r="8.500" fill="#19a3ec" stroke="none" />
        <path d="M12.500 6.500C11 4.500 6.500 4.500 6.500 7c0 3 6.500 1.800 6.500 5 0 2.500-5 3-6.800.5" stroke="#fff" strokeWidth="2" />
      </Svg>
    ),
  },
  {
    name: "Notepad",
    icon: (
      <Svg w={18} h={20}>
        <rect x="1" y="1" width="14" height="18" fill="#f4f6ee" stroke="#aab29a" />
        <rect x="1.500" y="12" width="13" height="6.500" fill="#5cb52c" stroke="none" />
        <path d="M4 6v5M6 7h2M9 7h2" stroke="#333" />
        <path d="M17 3l-6 11" stroke="#d9a136" strokeWidth="2" />
      </Svg>
    ),
  },
  {
    name: "Snipping Tool",
    icon: (
      <Svg w={20} h={19}>
        <ellipse cx="10" cy="7" rx="9" ry="5.500" transform="rotate(-20 10 7)" fill="#eceff2" stroke="#d9757a" />
        <path d="M10 7l3-4M10 7H5" stroke="#c0464c" />
        <path d="M10 9l6 7M15 9l-3 8" stroke="#9ab6cc" />
        <circle cx="17" cy="15" r="2" stroke="#2f7fc4" />
        <circle cx="12.500" cy="16.500" r="2" stroke="#2f7fc4" />
      </Svg>
    ),
  },
  {
    name: "WPS",
    open: true,
    active: true,
    icon: (
      <Svg w={21} h={18} sw={0}>
        <path d="M0 1h5l3 9 2-5h3L8 17H6z" fill="#e8352c" />
        <path d="M7 1h13l-6 14-3-7 2-4H9z" fill="#f0473c" />
        <rect x="13" y="10" width="7" height="7" fill="#4cb85c" />
        <path d="M18.500 11.800h-4v2h3.500v2h-4" stroke="#fff" strokeWidth="1" />
      </Svg>
    ),
  },
];

const SearchArt = () => (
  <Svg w={65} h={32} sw={0}>
    <circle cx="19" cy="16" r="11.500" fill="#1f84d8" />
    <path d="M9 10c6-3 12 2 20 0M8 16c6-2 14 3 22 0M10 22c5-1 12 2 18-1" stroke="#4aa4e8" strokeWidth="1.500" />
    <path d="M4 3h4v3H4zM33 2h3v3h-3zM58 3h3v3h-3zM1 11h2v2H1zM34 19h2v2h-2zM50 11h2v2h-2z" fill="#f0b32c" />
    <path d="M39 6l3 2 3-2-1 3 1 3-3-1-3 2 1-3z" fill="#df7ee8" />
    <circle cx="3" cy="27" r="2" fill="#62d5e8" />
    <path d="M43 16l15 3v4l-15-3z" fill="#a18fd6" />
    <path d="M43 15l4 1v5l-4-1z" fill="#6b58a8" />
    <path d="M51 22l-6 10M51 22v10M51 22l6 10" stroke="#5b4a94" strokeWidth="1.500" />
  </Svg>
);

const Taskbar = () => (
  <footer className="flex h-[33px] shrink-0 items-stretch border-t border-black bg-gradient-to-r from-[#20353f] via-[#1f3440] to-[#18233f] font-['Open_Sans','Noto_Sans',sans-serif] text-white">
    <button aria-label="Start" className="flex w-10 items-center justify-center">
      <Svg w={15} h={15} sw={0}>
        <path d="M0 2.200l6.500-.9v5.700H0zM7.500 1.100L15 0v7H7.500zM0 8h6.500v5.700L0 12.800zM7.500 8H15v7l-7.500-1.100z" fill="#fff" />
      </Svg>
    </button>
    <label className="flex w-[286px] items-center bg-[#f2f2f2] text-[#444]">
      <Svg w={14} h={14} className="ml-[10px] text-[#222]">
        <circle cx="8.500" cy="5.500" r="4.800" />
        <path d="M5 9L.5 13.500" />
      </Svg>
      <input placeholder="Type here to search" aria-label="Search" className="ml-[9px] min-w-0 flex-1 text-[12px] outline-none placeholder:text-[#444]" />
      <SearchArt />
    </label>
    <div className="flex">
      {apps.map(({ name, icon, open, active, badge }) => (
        <button
          key={name}
          aria-label={name}
          className={clsx("relative flex w-[41px] items-center justify-center", active && "bg-[#4b5b66]")}
        >
          {icon}
          {badge && <Badge>{badge}</Badge>}
          {open && <span className={clsx("absolute bottom-0 h-[2px] bg-[#76b9ed]", active ? "inset-x-0" : "inset-x-[4px]")} />}
        </button>
      ))}
    </div>
    <div className="ml-auto flex items-center">
      <Svg w={10} h={7}><path d="M.5 6L5 1.500 9.500 6" /></Svg>
      <Svg w={12} h={14} className="ml-[9px]" sw={1.3}>
        <path d="M1.500 4.500h6v5h-6zM8 7l3-2v5l-3-2M2.500 2.500c1-1.500 4-1.500 5 0M2.500 11.500c1 1.500 4 1.500 5 0" />
      </Svg>
      <Svg w={14} h={10} className="ml-[7px]" sw={0}>
        <path d="M3 9.500a2.800 2.800 0 01.3-5.500A4 4 0 0110.500 4a2.800 2.800 0 010 5.500z" fill="#fff" />
      </Svg>
      <Svg w={12} h={12} className="ml-[8px]">
        <path d="M1 11.500C1 6 5 1.500 11 1.500M3.500 11.500C3.500 7.500 7 4 11 4M6 11.500c0-2.500 2-5 5-5M8.500 11.500c0-1.500 1-2.500 2.500-2.500" opacity=".8" />
      </Svg>
      <Svg w={14} h={12} className="ml-[6px]" sw={1.3}>
        <path d="M4 3.500h9v6H4zM.5 1v3h4V1M2.500 4v5.500H5" />
        <path d="M6 5h5v3H6z" fill="#fff" stroke="none" />
      </Svg>
      <Svg w={14} h={12} className="ml-[6px]">
        <path d="M.5 4.500H3l3-3v9l-3-3H.5zM8 4c1 1 1 3 0 4M10 2.500c2 2 2 5 0 7M12 1c2 3 2 7 0 10" />
      </Svg>
      <span className="ml-[7px] text-[10px]">ENG</span>
      <div className="ml-[9px] text-center text-[10px] leading-[15px]">
        <div>04:02 PM</div>
        <div>23-09-2022</div>
      </div>
      <button aria-label="Notifications" className="relative ml-[12px]">
        <Svg w={20} h={20} sw={0}>
          <path d="M0 2h14v10H6l-2 3v-3H0z" fill="#fff" />
          <path d="M3 5h8M3 7.500h8M3 10h5" stroke="#1a2744" strokeWidth="1" />
        </Svg>
        <span className="absolute -right-px bottom-0 flex h-[14px] w-[14px] items-center justify-center rounded-full border border-[#8b909b] bg-[#33363d] text-[10px]">3</span>
      </button>
      <span className="ml-[12px] h-full w-px bg-[#59637a]" />
      <span className="w-[2px]" />
    </div>
  </footer>
);

const App = () => (
  <div className="flex h-screen flex-col overflow-hidden bg-[#f5f7f9] font-['Noto_Sans','Open_Sans',sans-serif]">
    <TitleBar />
    <MenuRow />
    <Ribbon />
    <FormulaBar />
    <main className="flex min-h-0 flex-1">
      <Sheet />
      <VerticalScroll />
    </main>
    <SheetTabs />
    <StatusBar />
    <Taskbar />
  </div>
);

export default memo(App);
